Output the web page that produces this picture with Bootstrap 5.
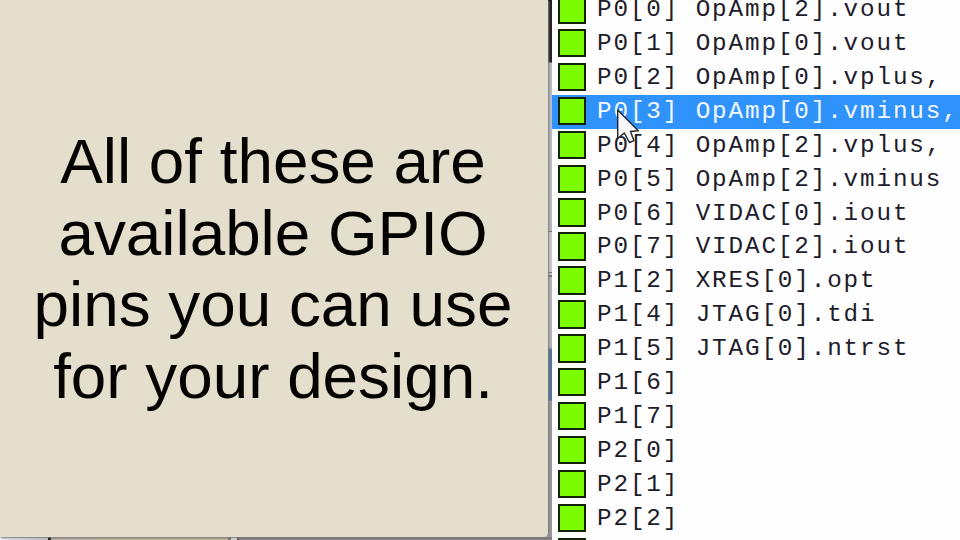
<!DOCTYPE html>
<html lang="en">
<head>
<meta charset="utf-8">
<meta name="viewport" content="width=device-width, initial-scale=1">
<title>GPIO pins</title>
<link href="https://cdn.jsdelivr.net/npm/bootstrap@5.3.0/dist/css/bootstrap.min.css" rel="stylesheet">
<style>
body{width:960px;height:540px;background:#fefefe}
.caption-col{width:552px}
.caption-pane{width:548px;height:537px;background:#e4decc;border-bottom-right-radius:4px;padding-top:126px;font:63.8px/71.6px "Liberation Sans",Arial,sans-serif;color:#050302;box-shadow:1px 1px 2px #77777b;z-index:2}
.caption-text{margin-left:-2px}
.backdrop-right{width:5px;background:linear-gradient(#222 0 62px,#b9b9c2 63px 231px,#777 231px 232px,#c9c9cf 232px 272px,#777 272px 273px,#c9c9cf 273px 275px,#777 275px 277px,#b4b4bf 277px 347px,#557499 350px 400px,#97979f 401px)}
.backdrop-bottom{height:3px;background:linear-gradient(90deg,#eee 0,#c9c9c9 48px,#191510 48px 51px,#b8ada3 51px 95px,#bbb596 97px 228px,#77736e 228px 231px,#ddd 231px 237px,#555 237px 239px,#858080 239px)}
.pin-list{height:546.9px;margin-top:-6.9px;font:24.3px/33.91px "Liberation Mono","Courier New",monospace;letter-spacing:1.86px;color:#211c2b}
.pin-row{height:33.91px;padding-left:6px;white-space:pre}
.pin-row.selected{background:#3093fb;color:#f4f8ff}
.swatch{width:28px;height:28.5px;background:#7cfc00;border:2px solid #10230a;margin:0 11px 1.6px 0}
.pointer-icon{left:616px;top:108px;z-index:3}
</style>
<script src="https://cdn.jsdelivr.net/npm/bootstrap@5.3.0/dist/js/bootstrap.bundle.min.js"></script>
</head>
<body class="d-flex overflow-hidden position-relative m-0">
<section class="caption-col d-flex flex-column flex-shrink-0 h-100 overflow-hidden">
  <div class="d-flex">
    <div class="caption-pane text-center flex-shrink-0 position-relative"><div class="caption-text">All of these are<br>available GPIO<br>pins you can use<br>for your design.</div></div>
    <div class="backdrop-right"></div>
  </div>
  <div class="backdrop-bottom"></div>
</section>
<main class="pin-list flex-grow-1 overflow-hidden">
  <div class="pin-row d-flex align-items-center"><span class="swatch flex-shrink-0"></span><span>P0[0] OpAmp[2].vout</span></div>
  <div class="pin-row d-flex align-items-center"><span class="swatch flex-shrink-0"></span><span>P0[1] OpAmp[0].vout</span></div>
  <div class="pin-row d-flex align-items-center"><span class="swatch flex-shrink-0"></span><span>P0[2] OpAmp[0].vplus,</span></div>
  <div class="pin-row selected d-flex align-items-center"><span class="swatch flex-shrink-0"></span><span>P0[3] OpAmp[0].vminus,</span></div>
  <div class="pin-row d-flex align-items-center"><span class="swatch flex-shrink-0"></span><span>P0[4] OpAmp[2].vplus,</span></div>
  <div class="pin-row d-flex align-items-center"><span class="swatch flex-shrink-0"></span><span>P0[5] OpAmp[2].vminus</span></div>
  <div class="pin-row d-flex align-items-center"><span class="swatch flex-shrink-0"></span><span>P0[6] VIDAC[0].iout</span></div>
  <div class="pin-row d-flex align-items-center"><span class="swatch flex-shrink-0"></span><span>P0[7] VIDAC[2].iout</span></div>
  <div class="pin-row d-flex align-items-center"><span class="swatch flex-shrink-0"></span><span>P1[2] XRES[0].opt</span></div>
  <div class="pin-row d-flex align-items-center"><span class="swatch flex-shrink-0"></span><span>P1[4] JTAG[0].tdi</span></div>
  <div class="pin-row d-flex align-items-center"><span class="swatch flex-shrink-0"></span><span>P1[5] JTAG[0].ntrst</span></div>
  <div class="pin-row d-flex align-items-center"><span class="swatch flex-shrink-0"></span><span>P1[6]</span></div>
  <div class="pin-row d-flex align-items-center"><span class="swatch flex-shrink-0"></span><span>P1[7]</span></div>
  <div class="pin-row d-flex align-items-center"><span class="swatch flex-shrink-0"></span><span>P2[0]</span></div>
  <div class="pin-row d-flex align-items-center"><span class="swatch flex-shrink-0"></span><span>P2[1]</span></div>
  <div class="pin-row d-flex align-items-center"><span class="swatch flex-shrink-0"></span><span>P2[2]</span></div>
  <div class="pin-row d-flex align-items-center"><span class="swatch flex-shrink-0"></span></div>
</main>
<svg class="pointer-icon position-absolute" width="26" height="38" viewBox="0 0 26 38" aria-hidden="true"><path d="M1.700 2V30.500L8.300 25L13.500 34.500L18 32.700L14.500 23.500L22.300 22.800Z" fill="#f8f8fa" stroke="#25252b" stroke-width="1.4" stroke-linejoin="round"/></svg>
</body>
</html>
